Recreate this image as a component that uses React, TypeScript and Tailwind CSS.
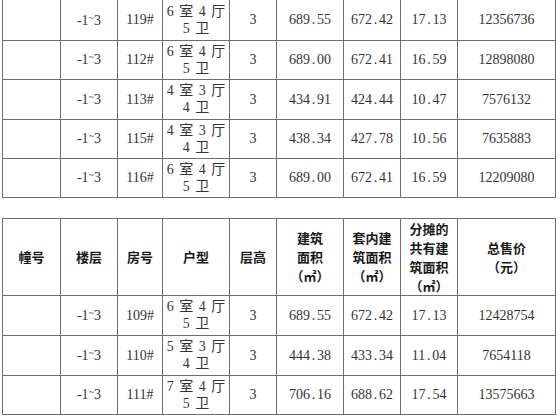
const widths = [58, 57, 45, 67, 47, 67, 57, 57, 98];

type Row = {
  room: string;
  layout: [string, string];
  area: string;
  inner: string;
  shared: string;
  price: string;
};

const topRows: Row[] = [
  { room: "119#", layout: ["6 室 4 厅", "5 卫"], area: "689.55", inner: "672.42", shared: "17.13", price: "12356736" },
  { room: "112#", layout: ["6 室 4 厅", "5 卫"], area: "689.00", inner: "672.41", shared: "16.59", price: "12898080" },
  { room: "113#", layout: ["4 室 3 厅", "4 卫"], area: "434.91", inner: "424.44", shared: "10.47", price: "7576132" },
  { room: "115#", layout: ["4 室 3 厅", "4 卫"], area: "438.34", inner: "427.78", shared: "10.56", price: "7635883" },
  { room: "116#", layout: ["6 室 4 厅", "5 卫"], area: "689.00", inner: "672.41", shared: "16.59", price: "12209080" },
];

const bottomRows: Row[] = [
  { room: "109#", layout: ["6 室 4 厅", "5 卫"], area: "689.55", inner: "672.42", shared: "17.13", price: "12428754" },
  { room: "110#", layout: ["5 室 3 厅", "4 卫"], area: "444.38", inner: "433.34", shared: "11.04", price: "7654118" },
  { room: "111#", layout: ["7 室 4 厅", "5 卫"], area: "706.16", inner: "688.62", shared: "17.54", price: "13575663" },
];

const topHeights = ["h-[40px]", "h-[39px]", "h-[40px]", "h-[39px]", "h-[39px]"];
const bottomHeights = ["h-[40px]", "h-[40px]", "h-[39px]"];

// 宋体的小数点占半个字宽，这里把点单独放宽
const Num = ({ value }: { value: string }) => {
  const [a, b] = value.split(".");
  return (
    <span>
      {a}
      <span className="inline-block w-[0.5em]">.</span>
      {b}
    </span>
  );
};

const Floors = () => (
  <span>
    -1<span className="text-[10px] align-[0.45em]">~</span>3
  </span>
);

const cell = "border border-[#6e6e6e] text-center align-middle p-0";

const Cols = () => (
  <colgroup>
    {widths.map((w, i) => (
      <col key={i} style={{ width: w }} />
    ))}
  </colgroup>
);

const DataRow = ({ row, h, first }: { row: Row; h: string; first?: boolean }) => {
  const c = `${cell} ${first ? "border-t-0" : ""}`;
  return (
    <tr className={h}>
      <td className={c}></td>
      <td className={c}>
        <Floors />
      </td>
      <td className={c}>{row.room}</td>
      <td className={`${c} leading-[17px] [word-spacing:2px]`}>
        <div>{row.layout[0]}</div>
        <div>{row.layout[1]}</div>
      </td>
      <td className={c}>3</td>
      <td className={c}>
        <Num value={row.area} />
      </td>
      <td className={c}>
        <Num value={row.inner} />
      </td>
      <td className={c}>
        <Num value={row.shared} />
      </td>
      <td className={c}>{row.price}</td>
    </tr>
  );
};

const th = `${cell} font-bold text-[13px] leading-[19px] text-[#1a1a1a] [font-family:'Noto_Sans_CJK_SC',sans-serif]`;

export default function App() {
  return (
    <div className="w-[560px] h-[419px] overflow-hidden bg-white pl-[2px] text-[14px] text-[#333333] [font-family:'Liberation_Serif','Noto_Sans_CJK_SC',serif]">
      <table className="table-fixed border-collapse w-[553px]">
        <Cols />
        <tbody>
          {topRows.map((r, i) => (
            <DataRow key={r.room} row={r} h={topHeights[i]} first={i === 0} />
          ))}
        </tbody>
      </table>

      <table className="table-fixed border-collapse w-[553px] mt-[20px]">
        <Cols />
        <thead>
          <tr className="h-[77px]">
            <th className={th}>幢号</th>
            <th className={th}>楼层</th>
            <th className={th}>房号</th>
            <th className={th}>户型</th>
            <th className={th}>层高</th>
            <th className={th}>
              建筑
              <br />
              面积
              <br />
              （㎡）
            </th>
            <th className={th}>
              套内建
              <br />
              筑面积
              <br />
              （㎡）
            </th>
            <th className={th}>
              分摊的
              <br />
              共有建
              <br />
              筑面积
              <br />
              （㎡）
            </th>
            <th className={th}>
              总售价
              <br />
              （元）
            </th>
          </tr>
        </thead>
        <tbody>
          {bottomRows.map((r, i) => (
            <DataRow key={r.room} row={r} h={bottomHeights[i]} />
          ))}
        </tbody>
      </table>
    </div>
  );
}
